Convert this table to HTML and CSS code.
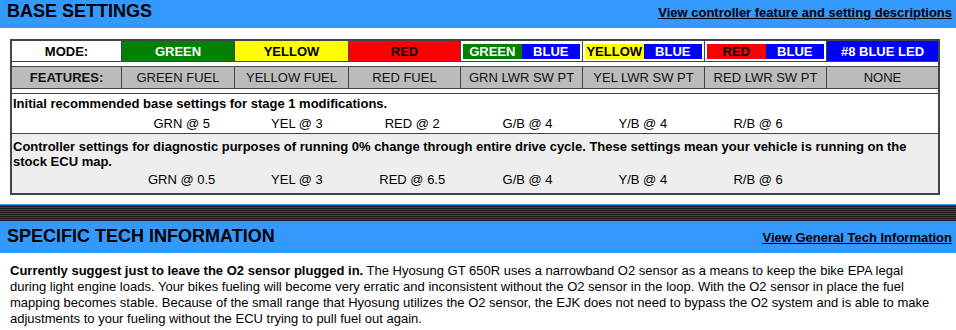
FILE: index.html
```html
<!DOCTYPE html>
<html>
<head>
<meta charset="utf-8">
<link rel="stylesheet" href="styles.css">
</head>
<body>
<div class="bar bar-first">
  <h2 class="bar-title">BASE SETTINGS</h2>
  <a class="bar-link" href="#">View controller feature and setting descriptions</a>
</div>

<div class="settings">
  <div class="row row-mode">
    <div class="cell cell-white strong">MODE:</div>
    <div class="cell c-green strong">GREEN</div>
    <div class="cell c-yellow strong">YELLOW</div>
    <div class="cell c-red strong">RED</div>
    <div class="cell cell-split"><span class="half c-green">GREEN</span><span class="half c-blue">BLUE</span></div>
    <div class="cell cell-split"><span class="half c-yellow">YELLOW</span><span class="half c-blue">BLUE</span></div>
    <div class="cell cell-split"><span class="half c-red">RED</span><span class="half c-blue">BLUE</span></div>
    <div class="cell c-blue strong">#8 BLUE LED</div>
  </div>
  <div class="spacer"></div>
  <div class="row row-features">
    <div class="cell cell-gray strong">FEATURES:</div>
    <div class="cell cell-gray">GREEN FUEL</div>
    <div class="cell cell-gray">YELLOW FUEL</div>
    <div class="cell cell-gray">RED FUEL</div>
    <div class="cell cell-gray">GRN LWR SW PT</div>
    <div class="cell cell-gray">YEL LWR SW PT</div>
    <div class="cell cell-gray">RED LWR SW PT</div>
    <div class="cell cell-gray">NONE</div>
  </div>
  <div class="spacer"></div>
  <div class="block block-one">
    <div class="block-title">Initial recommended base settings for stage 1 modifications.</div>
    <div class="values">
      <span>GRN @ 5</span><span>YEL @ 3</span><span>RED @ 2</span><span>G/B @ 4</span><span>Y/B @ 4</span><span>R/B @ 6</span>
    </div>
  </div>
  <div class="block block-two">
    <div class="block-title">Controller settings for diagnostic purposes of running 0% change through entire drive cycle. These settings mean your vehicle is running on the stock ECU map.</div>
    <div class="values">
      <span>GRN @ 0.5</span><span>YEL @ 3</span><span>RED @ 6.5</span><span>G/B @ 4</span><span>Y/B @ 4</span><span>R/B @ 6</span>
    </div>
  </div>
</div>

<div class="divider"></div>

<div class="bar">
  <h2 class="bar-title">SPECIFIC TECH INFORMATION</h2>
  <a class="bar-link" href="#">View General Tech Information</a>
</div>

<p class="info"><b>Currently suggest just to leave the O2 sensor plugged in.</b> The Hyosung GT 650R uses a narrowband O2 sensor as a means to keep the bike EPA legal during light engine loads. Your bikes fueling will become very erratic and inconsistent without the O2 sensor in the loop. With the O2 sensor in place the fuel mapping becomes stable. Because of the small range that Hyosung utilizes the O2 sensor, the EJK does not need to bypass the O2 system and is able to make adjustments to your fueling without the ECU trying to pull fuel out again.</p>
</body>
</html>
```

FILE: styles.css
```css
html, body {
  margin: 0;
  padding: 0;
  background: #ffffff;
}

body {
  font-family: "Liberation Sans", Arial, sans-serif;
  font-size: 13px;
  color: #000000;
  overflow: hidden;
}

.bar {
  display: flex;
  justify-content: space-between;
  align-items: baseline;
  height: 32px;
  box-sizing: border-box;
  padding: 5px 4px 0 7px;
  background: #3399ff;
}

.bar-first {
  margin-top: -4px;
}

.bar-title {
  margin: 0;
  font-size: 18px;
  line-height: 21px;
  font-weight: bold;
}

.bar-link {
  font-size: 13px;
  font-weight: bold;
  color: #000000;
  text-decoration: underline;
}

.settings {
  display: grid;
  row-gap: 1px;
  width: 930px;
  box-sizing: border-box;
  margin: 11px 0 0 10px;
  border: 2px solid #444444;
  background: #444444;
}

.row {
  display: grid;
  grid-template-columns: 109px 112px 113px 111px 121px 121px 121px 111px;
  column-gap: 1px;
}

.row-mode {
  height: 20px;
}

.row-features {
  height: 21px;
}

.cell {
  display: flex;
  align-items: center;
  justify-content: center;
  line-height: 15px;
  white-space: nowrap;
}

.strong {
  font-weight: bold;
}

.cell-white {
  background: #ffffff;
}

.cell-gray {
  background: #bbbbbb;
  color: #111111;
}

.c-green {
  background: #008000;
  color: #ffffff;
}

.c-yellow {
  background: #ffff00;
  color: #000000;
}

.c-red {
  background: #ff0000;
  color: #000000;
}

.c-blue {
  background: #0000ff;
  color: #ffffff;
}

.cell-split {
  display: grid;
  grid-template-columns: 1fr 1fr;
  padding: 2px;
  background: #ffffff;
}

.half {
  display: flex;
  align-items: center;
  justify-content: center;
  font-weight: bold;
}

.spacer {
  height: 4px;
  background: #ffffff;
}

.block {
  box-sizing: border-box;
  padding: 2px 0 0 0;
  background: #ffffff;
}

.block-one {
  height: 39px;
}

.block-two {
  height: 59px;
  padding-top: 5px;
  background: #eeeeee;
}

.block-title {
  padding-left: 1px;
  font-weight: bold;
  line-height: 15px;
}

.values {
  display: grid;
  grid-template-columns: repeat(6, 115.3px);
  padding-left: 112px;
  margin-top: 5px;
  line-height: 15px;
}

.block-two .values {
  margin-top: 3px;
}

.values span {
  text-align: center;
  white-space: nowrap;
}

.divider {
  margin-top: 9px;
  height: 16px;
  border-top: 1px solid #3399ff;
  background: repeating-linear-gradient(to bottom, #404040 0, #404040 1px, #1e1e1e 1px, #1e1e1e 2px);
}

.info {
  width: 930px;
  margin: 10px 0 0 10px;
  font-size: 13px;
  line-height: 16px;
}
```
